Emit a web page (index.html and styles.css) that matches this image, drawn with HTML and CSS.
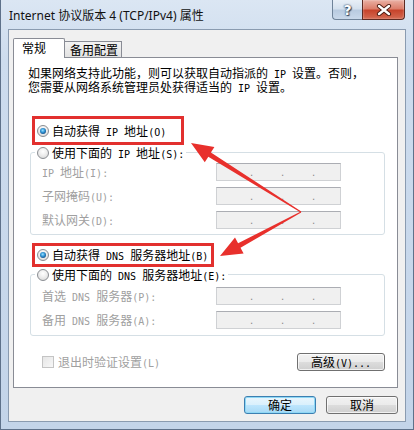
FILE: index.html
```html
<!DOCTYPE html>
<html lang="zh-CN">
<head>
<meta charset="utf-8">
<title>Internet 协议版本 4 (TCP/IPv4) 属性</title>
<link rel="stylesheet" href="styles.css">
</head>
<body>
<div class="window">
  <div class="titlebar">
    <div class="title">Internet 协议版本 4 (TCP/IPv4) 属性</div>
    <div class="caption-btns">
      <div class="cap help">?</div>
      <div class="cap close">
        <svg width="16" height="12" viewBox="0 0 16 12"><path d="M3 2 L13 10 M13 2 L3 10" stroke="#4a1a10" stroke-width="4.2" stroke-linecap="round"/><path d="M3 2 L13 10 M13 2 L3 10" stroke="#ffffff" stroke-width="2.4" stroke-linecap="round"/></svg>
      </div>
    </div>
  </div>
  <div class="client">
    <div class="tabs">
      <div class="tab active">常规</div>
      <div class="tab">备用配置</div>
    </div>
    <div class="panel">
      <p class="intro">如果网络支持此功能，则可以获取自动指派的<span class="en"> IP </span>设置。否则，<br>您需要从网络系统管理员处获得适当的<span class="en"> IP </span>设置。</p>
      <div class="mark mark-ip">
        <label class="opt"><span class="radio checked"></span><span class="txt">自动获得<span class="en"> IP </span>地址<span class="en">(O)</span></span></label>
      </div>
      <fieldset class="group g1">
        <legend><label class="opt"><span class="radio"></span><span class="txt">使用下面的<span class="en"> IP </span>地址<span class="en">(S):</span></span></label></legend>
        <div class="field"><span class="lbl"><span class="en">IP </span>地址<span class="en">(I):</span></span><span class="ip"><i>.</i><i>.</i><i>.</i></span></div>
        <div class="field"><span class="lbl">子网掩码<span class="en">(U):</span></span><span class="ip"><i>.</i><i>.</i><i>.</i></span></div>
        <div class="field"><span class="lbl">默认网关<span class="en">(D):</span></span><span class="ip"><i>.</i><i>.</i><i>.</i></span></div>
      </fieldset>
      <div class="mark mark-dns">
        <label class="opt"><span class="radio checked"></span><span class="txt">自动获得<span class="en"> DNS </span>服务器地址<span class="en">(B)</span></span></label>
      </div>
      <fieldset class="group g2">
        <legend><label class="opt"><span class="radio"></span><span class="txt">使用下面的<span class="en"> DNS </span>服务器地址<span class="en">(E):</span></span></label></legend>
        <div class="field"><span class="lbl">首选<span class="en"> DNS </span>服务器<span class="en">(P):</span></span><span class="ip"><i>.</i><i>.</i><i>.</i></span></div>
        <div class="field"><span class="lbl">备用<span class="en"> DNS </span>服务器<span class="en">(A):</span></span><span class="ip"><i>.</i><i>.</i><i>.</i></span></div>
      </fieldset>
      <div class="bottom-row">
        <label class="check"><span class="box"></span><span class="txt">退出时验证设置<span class="en">(L)</span></span></label>
        <button class="btn adv">高级<span class="en">(V)...</span></button>
      </div>
    </div>
    <div class="actions">
      <button class="btn default">确定</button>
      <button class="btn">取消</button>
    </div>
  </div>
  <svg class="arrows" width="414" height="430" viewBox="0 0 414 430">
    <polygon points="190,143 213.4,147.1 209.9,152.6 300.3,211.6 299.7,212.4 207.3,156.8 203.8,162.3" fill="#e8302c"/>
    <polygon points="219,256 242.6,253.4 239.5,247.7 300.2,212.4 299.8,211.6 237.1,243.3 234,237.6" fill="#e8302c"/>
  </svg>
</div>
</body>
</html>
```

FILE: styles.css
```css
html, body {
  margin: 0;
  padding: 0;
}
body {
  width: 414px;
  height: 430px;
  overflow: hidden;
  font-family: "Noto Sans CJK SC", "Noto Sans", sans-serif;
  font-size: 12px;
  color: #000;
  background: #c5d6ea;
}
.window {
  position: relative;
  width: 414px;
  height: 430px;
  box-sizing: border-box;
  padding: 0 7px 7px;
  border: 1px solid #5e718a;
  border-top: none;
  background: linear-gradient(to bottom, #dbe6f3 0, #cddcee 60px, #c3d4e9 100%);
  display: flex;
  flex-direction: column;
}
.titlebar {
  height: 29px;
  display: flex;
  align-items: flex-start;
  flex: none;
}
.title {
  font-family: "Noto Sans", "Noto Sans CJK SC", sans-serif;
  font-size: 12px;
  line-height: 29px;
  padding-left: 1px;
  padding-top: 1px;
  color: #111;
  white-space: nowrap;
}
.caption-btns {
  margin-left: auto;
  margin-right: 1px;
  display: flex;
}
.cap {
  height: 20px;
  box-sizing: border-box;
  display: flex;
  align-items: center;
  justify-content: center;
}
.help {
  width: 30px;
  border: 1px solid #6f8399;
  border-top: none;
  border-right: none;
  border-bottom-left-radius: 4px;
  background: linear-gradient(to bottom, #e8eff7 0, #d5e1ee 45%, #b9cbe0 55%, #c9d8ea 100%);
  color: #fff;
  font-family: "DejaVu Sans", sans-serif;
  font-weight: bold;
  font-size: 14px;
  text-shadow: 0 0 1px #34475e, 0 0 2px #34475e, 1px 1px 1px #34475e;
}
.close {
  width: 43px;
  border: 1px solid #5d2a22;
  border-top: none;
  border-bottom-right-radius: 4px;
  background: linear-gradient(to bottom, #eab0a3 0, #dc7f6c 45%, #c7442c 55%, #d46a52 100%);
  box-shadow: inset 0 0 2px rgba(255,255,255,0.6);
}
.client {
  flex: 1;
  background: #f0f0f0;
  border: 1px solid #8a9bb0;
  padding: 8px 7px 0 4px;
  display: flex;
  flex-direction: column;
}
.tabs {
  height: 19px;
  display: flex;
  align-items: flex-start;
  flex: none;
}
.tab {
  box-sizing: border-box;
  border: 1px solid #898c95;
  border-bottom: none;
  line-height: 14px;
  white-space: nowrap;
}
.tab.active {
  position: relative;
  z-index: 1;
  width: 52px;
  height: 20px;
  background: #fff;
  padding: 2px 0 0 8px;
  border-radius: 2px 2px 0 0;
}
.tab:not(.active) {
  margin-top: 3px;
  margin-left: -1px;
  height: 16px;
  width: 58px;
  padding: 1px 0 0 5px;
  background: linear-gradient(to bottom, #f3f3f3, #e2e2e2);
}
.panel {
  box-sizing: border-box;
  width: 385px;
  height: 331px;
  background: #fff;
  border: 1px solid #898c95;
  padding: 8px 0 0 0;
  display: flex;
  flex-direction: column;
  align-items: flex-start;
  flex: none;
}
.en {
  font-family: "DejaVu Sans Mono", "Liberation Mono", monospace;
  font-size: 10px;
  line-height: 10px;
}
.txt {
  white-space: pre;
}
.intro {
  margin: 0 0 0 14px;
  height: 28px;
  line-height: 14px;
  white-space: nowrap;
}
.mark {
  box-sizing: border-box;
  border: 3px solid #e2302e;
  padding: 0 0 0 2px;
  display: flex;
  align-items: center;
  margin-left: 18px;
  flex: none;
}
.mark-ip {
  margin-top: 22px;
  width: 152px;
  height: 29px;
  padding-top: 1px;
}
.mark-dns {
  margin-top: 8px;
  width: 182px;
  height: 24px;
}
.opt {
  display: flex;
  align-items: center;
  height: 13px;
  line-height: 13px;
  white-space: nowrap;
}
.radio {
  position: relative;
  width: 12px;
  height: 12px;
  box-sizing: border-box;
  border-radius: 50%;
  border: 1px solid #8a8d92;
  background: radial-gradient(circle at 50% 35%, #ffffff 0, #f0f0f0 40%, #d4d4d4 100%);
  margin-right: 3px;
  flex: none;
}
.radio.checked::after {
  content: "";
  position: absolute;
  left: 2px;
  top: 2px;
  width: 6px;
  height: 6px;
  border-radius: 50%;
  background: radial-gradient(circle at 45% 40%, #9fe0ff 0, #3aa0de 35%, #11508c 75%, #0b2f5a 100%);
}
.group {
  box-sizing: border-box;
  width: 355px;
  margin: 1px 0 0 16px;
  border: 1px solid #d5dfe5;
  border-radius: 3px;
  padding: 0 0 0 4px;
  min-width: 0;
  flex: none;
}
.group legend {
  padding: 0 2px;
  height: 13px;
  line-height: 13px;
}
.g1 {
  padding-top: 4px;
  padding-bottom: 5px;
}
.g2 {
  padding-top: 6px;
  padding-bottom: 6px;
}
.field {
  display: flex;
  align-items: center;
  height: 18px;
  padding-left: 7px;
  color: #a0a0a0;
  white-space: nowrap;
}
.field + .field {
  margin-top: 6px;
}
.lbl {
  width: 174px;
  flex: none;
  line-height: 13px;
  white-space: pre;
}
.ip {
  box-sizing: border-box;
  width: 125px;
  height: 18px;
  border: 1px solid #cfd1d4;
  border-top-color: #abadb3;
  background: #f0f0f0;
  display: flex;
  align-items: flex-end;
  gap: 28px;
  padding: 0 0 3px 33px;
}
.ip i {
  font-style: normal;
  width: 3px;
  line-height: 8px;
  font-size: 10px;
  color: #8a8a8a;
  font-family: "DejaVu Sans", sans-serif;
}
.bottom-row {
  margin-top: 17px;
  align-self: stretch;
  display: flex;
  align-items: center;
  padding: 0 12px 0 28px;
  flex: none;
}
.check {
  display: flex;
  align-items: center;
  color: #a0a0a0;
  line-height: 13px;
  white-space: nowrap;
}
.box {
  width: 12px;
  height: 12px;
  box-sizing: border-box;
  border: 1px solid #c4c4c4;
  background: linear-gradient(135deg, #e6e6e6, #f7f7f7);
  margin-right: 4px;
}
.btn {
  font-family: "Noto Sans CJK SC", sans-serif;
  font-size: 12px;
  line-height: 14px;
  color: #000;
  box-sizing: border-box;
  height: 18px;
  padding: 0;
  border: 1px solid #707070;
  border-radius: 3px;
  background: linear-gradient(to bottom, #f2f2f2 0, #ebebeb 50%, #dddddd 50%, #cfcfcf 100%);
  box-shadow: inset 0 0 0 1px rgba(255,255,255,0.7);
}
.adv {
  margin-left: auto;
  width: 88px;
}
.actions {
  margin-top: 8px;
  display: flex;
  justify-content: flex-end;
  gap: 10px;
  flex: none;
}
.actions .btn {
  width: 72px;
}
.btn.default {
  border-color: #3c7fb1;
  background: linear-gradient(to bottom, #eaf6fd 0, #d9f0fc 50%, #bee6fd 50%, #a7d9f5 100%);
  box-shadow: inset 0 0 0 1px #8fd8f5;
}
.arrows {
  position: absolute;
  left: 0;
  top: 0;
  pointer-events: none;
}
```
